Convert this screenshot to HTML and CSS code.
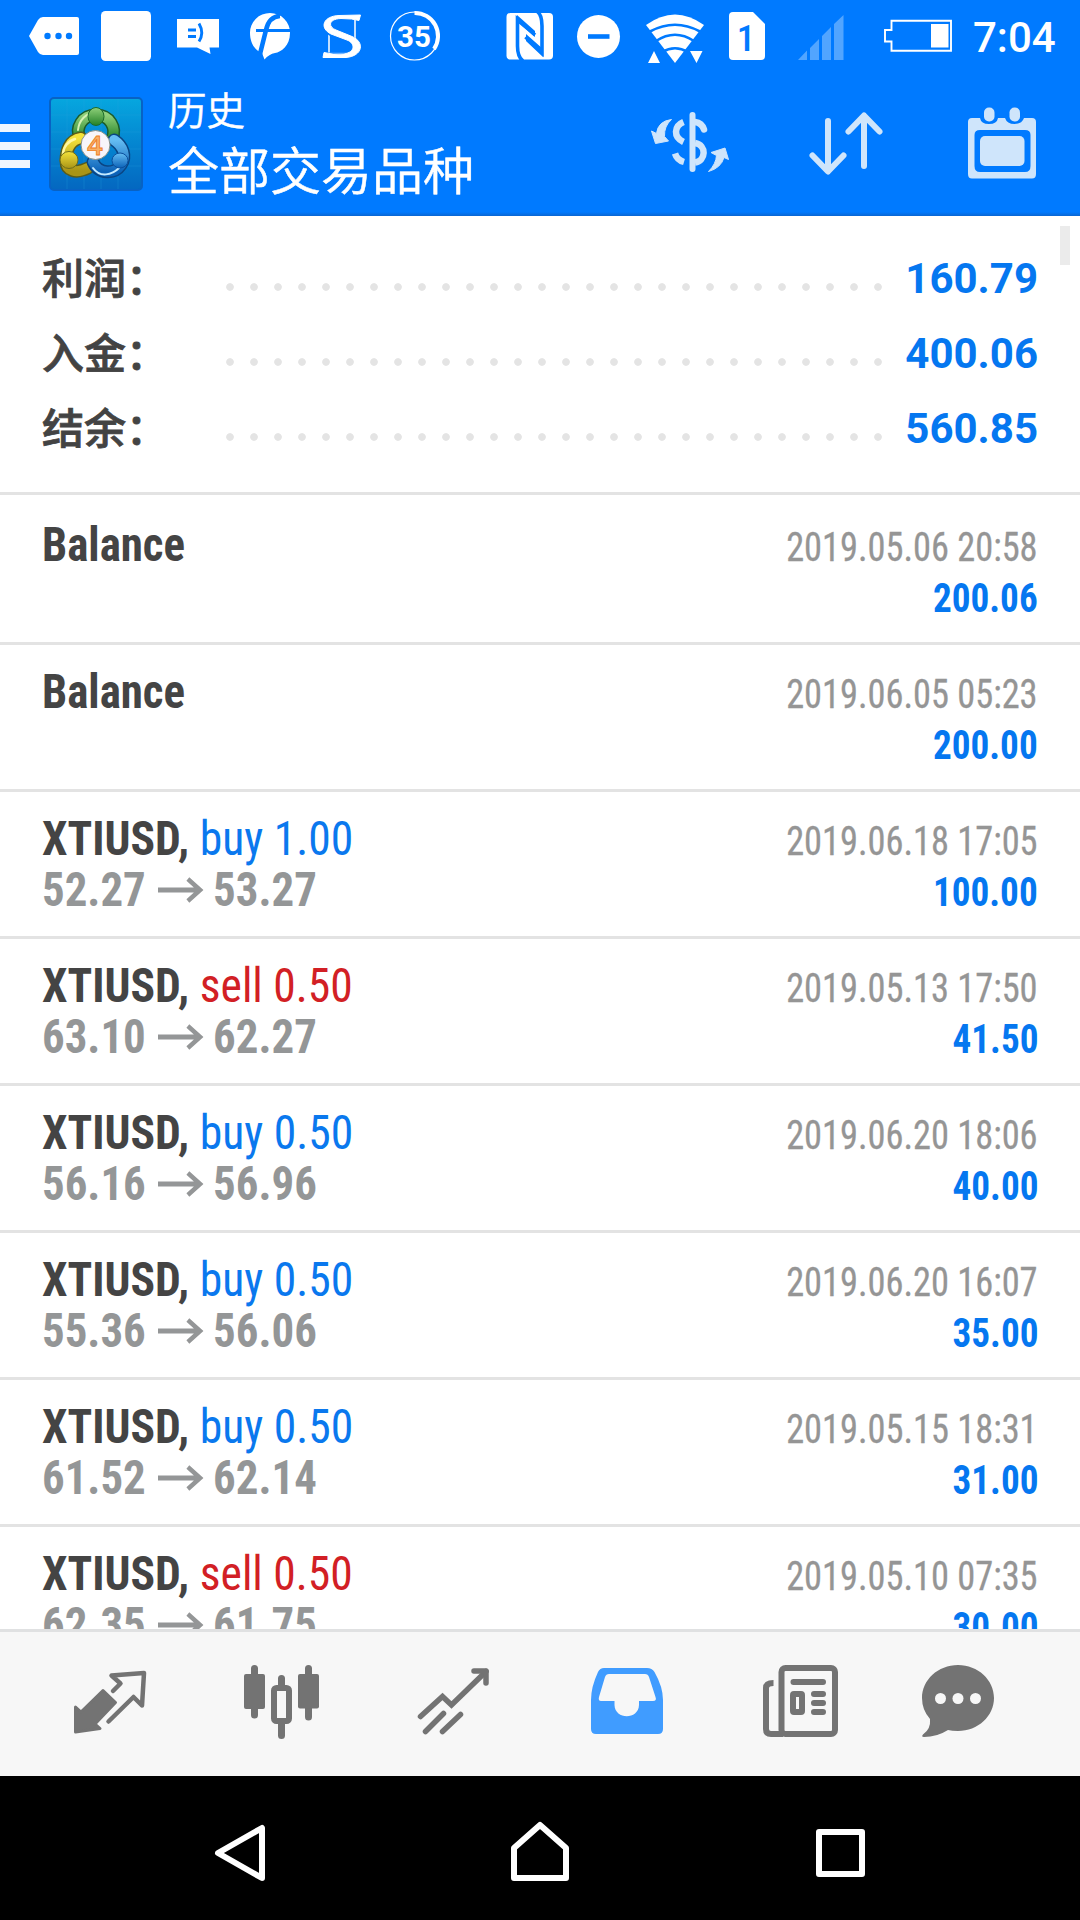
FILE: index.html
```html
<!DOCTYPE html>
<html lang="zh-CN">
<head>
<meta charset="utf-8">
<title>历史</title>
<link rel="stylesheet" href="styles.css">
</head>
<body>
<div class="screen">
  <header class="top">
    <div class="status">
      <svg width="90" height="72" viewBox="0 0 90 72"><path fill="#fff" d="M29 36 38 20Q40 17 43 17H77Q79 17 79 19V53Q79 55 77 55H43Q40 55 38 52Z"/><g fill="#007aff"><circle cx="47.5" cy="36" r="3.2"/><circle cx="58.5" cy="36" r="3.2"/><circle cx="69" cy="36" r="3.2"/></g></svg>
      <svg width="74" height="72" viewBox="90 0 74 72"><rect x="101" y="11" width="50" height="50" rx="4.500" fill="#fff"/></svg>
      <svg width="72" height="72" viewBox="164 0 72 72"><path fill="#fff" d="M177 19H219V47.500H209.500L210.500 54 197 47.500H177Z"/><path d="M188 30H196M188 36.500H196M199 23.500Q204.500 33 199 41.500" fill="none" stroke="#007aff" stroke-width="2.900"/></svg>
      <svg width="72" height="72" viewBox="236 0 72 72"><path fill="#fff" d="M270 13A20 19.500 0 0 1 290 33C290 46 281 52 275 53Q269 54 264.500 59.500L262 53C254 50 250 42 250 33A20 19.500 0 0 1 270 13Z"/><path d="M280 16Q269 16.500 266 30L259.500 56" fill="none" stroke="#007aff" stroke-width="4.600"/><path d="M256 30.500H291" fill="none" stroke="#007aff" stroke-width="3"/></svg>
      <svg width="72" height="72" viewBox="308 0 72 72"><path d="M329 18.500H355V53.500H329Z" fill="none" stroke="#fff" stroke-width="1.500"/><path d="M360 16.500H340C325 16 321 28 332 33L350 39C364 45 362 56 346 56H324" fill="none" stroke="#007aff" stroke-width="7"/><path d="M360.500 15 359 20.500Q353 18.500 341 18.500C328 19 328 27 336 30L352 36.500C365 42 363 56 346 57.500H323L324 52.500Q332 55 344 54C356 52 355 43 347 40L331 34C319 28 323 16 339 15.500Z" fill="#fff" stroke="#fff"/></svg>
      <svg width="115" height="72" viewBox="380 0 115 72"><circle cx="414.500" cy="36" r="24" fill="none" stroke="#fff" stroke-width="1.200"/><path d="M414.500 13A23 23 0 0 1 434 49" fill="none" stroke="#fff" stroke-width="4"/><text class="badge-num" x="414" y="46.500" text-anchor="middle">35</text></svg>
      <svg width="70" height="72" viewBox="495 0 70 72"><rect x="506.500" y="13" width="46.500" height="46.500" rx="4" fill="#fff"/><g fill="none" stroke="#007aff" stroke-width="3.600"><path d="M523 61Q517.500 57 517.500 46V19L535 35"/><path d="M537 11Q542 15 542 26V53L525.500 37"/></g><path d="M517 15 535 31V37L517 22ZM543 57 526 41V34L543 49Z" fill="#007aff"/></svg>
      <svg width="71" height="72" viewBox="565 0 71 72"><circle cx="598.500" cy="36.500" r="21.500" fill="#fff"/><path d="M588 36.500H609.500" stroke="#007aff" stroke-width="4.600"/></svg>
      <svg width="81" height="72" viewBox="636 0 81 72"><path fill="#fff" d="M646 25Q675 4 704 25L675 63Z"/><g fill="none" stroke="#007aff" stroke-width="2.600"><path d="M650 31.500Q675 18 700 31.500"/><path d="M656 41Q675 28.500 694 41"/><path d="M662 52Q675 44.500 688 52"/></g><path fill="#fff" stroke="#007aff" stroke-width="2" paint-order="stroke" d="M648 63 654 51 660 63ZM690 51H702.500L696.500 63Z"/></svg>
      <svg width="70" height="72" viewBox="717 0 70 72"><path fill="#fff" d="M733 12H753L765 24V56Q765 60 761 60H733Q729 60 729 56V16Q729 12 733 12Z"/><text class="sim-num" x="746" y="51" text-anchor="middle">1</text></svg>
      <svg width="75" height="72" viewBox="787 0 75 72"><path fill="#52a5ff" d="M798 60 807 50.500V60ZM810 60V48L819 39V60ZM822 60V36L831 27V60ZM834 60V24L843.500 15V60Z"/></svg>
      <svg width="98" height="72" viewBox="862 0 98 72"><path d="M891.500 20.800H951V50.800H891.500V41.500H885V30H891.500Z" fill="none" stroke="#fff" stroke-width="1.900"/><rect x="931" y="24" width="17.500" height="23.500" fill="#fff"/></svg>
      <span class="clock">7:04</span>
    </div>
    <div class="toolbar">
      <svg width="49" height="144" viewBox="0 72 49 144"><path fill="#eff6ff" d="M0 124H30V132H0ZM0 142H30V150H0ZM0 160H30V168H0Z"/></svg>
      <svg width="94" height="144" viewBox="49 72 94 144">
        <defs>
          <linearGradient id="tile" x1="0" y1="0" x2="0" y2="1"><stop offset="0" stop-color="#06a7df"/><stop offset=".55" stop-color="#0482cf"/><stop offset="1" stop-color="#0467c0"/></linearGradient>
          <linearGradient id="green" x1="0" y1="0" x2="0" y2="1"><stop offset="0" stop-color="#8fd07a"/><stop offset="1" stop-color="#238127"/></linearGradient>
          <linearGradient id="gold" x1="0" y1="0" x2="0" y2="1"><stop offset="0" stop-color="#f4e23a"/><stop offset="1" stop-color="#a99416"/></linearGradient>
          <linearGradient id="azure" x1="0" y1="0" x2="0" y2="1"><stop offset="0" stop-color="#65bdf3"/><stop offset="1" stop-color="#0b62b8"/></linearGradient>
        </defs>
        <rect x="50" y="98" width="92" height="92" rx="4" fill="url(#tile)" stroke="#0862c4" stroke-width="2"/>
        <path d="M67 99V189M84 99V189M101 99V189M118 99V189M51 115H141M51 132H141M51 149H141M51 166H141" stroke="#2aa5df" stroke-width=".6" opacity=".45"/>
        <g fill="none" stroke-linecap="round">
          <path d="M80 138C75 128 82 115 96 115S117 128 112 139" stroke="#1b5c2c" stroke-width="13"/><path d="M80 138C75 128 82 115 96 115S117 128 112 139" stroke="url(#green)" stroke-width="10"/>
          <path d="M81 138C69 140 66 151 66 161S76 174 88 168" stroke="#5a5c1a" stroke-width="13"/><path d="M81 138C69 140 66 151 66 161S76 174 88 168" stroke="url(#gold)" stroke-width="10"/>
          <path d="M114 140C123 146 127 156 121 165S99 175 93 162" stroke="#0a4583" stroke-width="13"/><path d="M114 140C123 146 127 156 121 165S99 175 93 162" stroke="url(#azure)" stroke-width="10"/>
          <path d="M78 130C79 120 86 113 95 113" stroke="#d5f0b4" stroke-width="2"/><path d="M63 155C63 147 68 141 75 139" stroke="#fff7a0" stroke-width="2.500"/><path d="M93 168C100 178 112 175 119 168" stroke="#c3e9ff" stroke-width="2"/>
        </g>
        <ellipse cx="96" cy="116.500" rx="8" ry="9" fill="url(#green)" stroke="#1b6a2b"/>
        <ellipse cx="69" cy="160" rx="9" ry="8.500" fill="url(#gold)" stroke="#6f6d1a"/>
        <ellipse cx="120" cy="160.500" rx="8" ry="7.500" fill="url(#azure)" stroke="#0b4f9d"/>
        <circle cx="95.500" cy="145" r="14.500" fill="#f7f5fa" stroke="#85908a"/>
        <text class="logo-num" x="95" y="154.500" text-anchor="middle">4</text>
      </svg>
      <div class="titles"><span class="title-small">历史</span><span class="title-big">全部交易品种</span></div>
      <svg width="120" height="144" viewBox="630 72 120 144"><g fill="none" stroke="#cfe5fb"><path d="M692.500 115V169" stroke-width="6" stroke-linecap="round"/><path d="M683.500 122C674 126 673 137 683.500 142" stroke-width="6.500"/><path d="M675 153.500Q677 160 684 162" stroke-width="6.500"/><path d="M695 122Q702 123 704 129.500" stroke-width="6.500" stroke-linecap="round"/><path d="M695 143C707 145 706 161 695 162.500" stroke-width="6.500"/></g><path fill="#cfe5fb" d="M671.500 119.500Q658 121 656.500 133.500L651.500 131 655.500 143.500 668.500 141 664.500 136.500Q664 126 671.500 119.500ZM708.500 171.500Q721 168 724 157.500L728.500 159.500 725 148 711 152.500 716.500 155.500Q716 164 708.500 171.500Z" stroke="#cfe5fb" stroke-linejoin="round"/></svg>
      <svg width="180" height="144" viewBox="750 72 180 144"><g fill="none" stroke="#cfe5fb" stroke-width="6" stroke-linecap="round" stroke-linejoin="round"><path d="M828 121V171M812.500 155.500 828 171.500 843.500 155.500"/><path d="M864 166V116M848.500 131.500 864 115.500 879.500 131.500"/></g></svg>
      <svg width="150" height="144" viewBox="930 72 150 144"><path fill="#cfe5fb" fill-rule="evenodd" d="M972 118H980Q981 124 989 124T998 118H1005Q1007 124 1014.500 124T1024 118H1032Q1036 118 1036 122V174Q1036 178.500 1032 178.500H972Q968 178.500 968 174V122Q968 118 972 118ZM980 130Q974.500 130 974.500 135V166Q974.500 172 980 172H1025Q1030.500 172 1030.500 166V135Q1030.500 130 1025 130Z"/><rect x="980" y="136" width="44.500" height="30" rx="5" fill="#cfe5fb"/><rect x="984" y="107.500" width="10.500" height="14" rx="5" fill="#cfe5fb"/><rect x="1009.500" y="107.500" width="10.500" height="14" rx="5" fill="#cfe5fb"/></svg>
    </div>
  </header>

  <main class="list">
    <section class="summary">
      <div class="sum"><span class="sum-label">利润：</span><i class="dots"></i><b class="sum-val">160.79</b></div>
      <div class="sum"><span class="sum-label">入金：</span><i class="dots"></i><b class="sum-val">400.06</b></div>
      <div class="sum"><span class="sum-label">结余：</span><i class="dots"></i><b class="sum-val">560.85</b></div>
      <span class="scrollbar"></span>
    </section>
    <article class="deal"><div class="left"><span class="name balance">Balance</span></div><div class="right"><span class="date">2019.05.06 20:58</span><b class="value">200.06</b></div></article>
    <article class="deal"><div class="left"><span class="name balance">Balance</span></div><div class="right"><span class="date">2019.06.05 05:23</span><b class="value">200.00</b></div></article>
    <article class="deal"><div class="left"><span class="name">XTIUSD, <span class="buy">buy 1.00</span></span><span class="price">52.27<svg class="arrow" viewBox="0 0 49 26"><path d="M0 13H45M32 2 45 13 32 24"/></svg>53.27</span></div><div class="right"><span class="date">2019.06.18 17:05</span><b class="value">100.00</b></div></article>
    <article class="deal"><div class="left"><span class="name">XTIUSD, <span class="sell">sell 0.50</span></span><span class="price">63.10<svg class="arrow" viewBox="0 0 49 26"><path d="M0 13H45M32 2 45 13 32 24"/></svg>62.27</span></div><div class="right"><span class="date">2019.05.13 17:50</span><b class="value">41.50</b></div></article>
    <article class="deal"><div class="left"><span class="name">XTIUSD, <span class="buy">buy 0.50</span></span><span class="price">56.16<svg class="arrow" viewBox="0 0 49 26"><path d="M0 13H45M32 2 45 13 32 24"/></svg>56.96</span></div><div class="right"><span class="date">2019.06.20 18:06</span><b class="value">40.00</b></div></article>
    <article class="deal"><div class="left"><span class="name">XTIUSD, <span class="buy">buy 0.50</span></span><span class="price">55.36<svg class="arrow" viewBox="0 0 49 26"><path d="M0 13H45M32 2 45 13 32 24"/></svg>56.06</span></div><div class="right"><span class="date">2019.06.20 16:07</span><b class="value">35.00</b></div></article>
    <article class="deal"><div class="left"><span class="name">XTIUSD, <span class="buy">buy 0.50</span></span><span class="price">61.52<svg class="arrow" viewBox="0 0 49 26"><path d="M0 13H45M32 2 45 13 32 24"/></svg>62.14</span></div><div class="right"><span class="date">2019.05.15 18:31</span><b class="value">31.00</b></div></article>
    <article class="deal"><div class="left"><span class="name">XTIUSD, <span class="sell">sell 0.50</span></span><span class="price">62.35<svg class="arrow" viewBox="0 0 49 26"><path d="M0 13H45M32 2 45 13 32 24"/></svg>61.75</span></div><div class="right"><span class="date">2019.05.10 07:35</span><b class="value">30.00</b></div></article>
  </main>

  <nav class="tabs">
    <svg width="180" height="144" viewBox="0 1632 180 144"><path fill="#737373" stroke="#737373" stroke-width="3" stroke-linejoin="round" d="M75.500 1707 81 1712 103 1690.500 115.500 1702.500 95 1724 100 1728.500 75.500 1732Z"/><path fill="none" stroke="#737373" stroke-width="4.500" stroke-linecap="round" stroke-linejoin="round" d="M113 1691 120.500 1683.500 111.500 1675.500 144 1673 142 1705.500 133.500 1697 108.500 1721.500"/></svg>
    <svg width="190" height="144" viewBox="180 1632 190 144"><g stroke="#737373" stroke-width="7" stroke-linecap="round"><path d="M254.500 1668.500V1715M281.500 1678.500V1690M281.500 1720V1735.500M308.500 1668.500V1717"/></g><g fill="#737373"><rect x="244" y="1674" width="21" height="35" rx="2"/><rect x="298" y="1674" width="21" height="34.500" rx="2"/></g><rect x="274" y="1688" width="15" height="33" rx="2.500" fill="#f7f7f7" stroke="#737373" stroke-width="6"/></svg>
    <svg width="170" height="144" viewBox="370 1632 170 144"><g fill="none" stroke="#737373" stroke-width="5.500"><path stroke-linecap="round" d="M420.500 1716.500 442.500 1696.500 451.500 1705 486 1671.500"/><path stroke-linecap="round" stroke-linejoin="round" d="M474 1671H486V1683"/><path d="M443.500 1713.500 425.500 1731.500M460.500 1714.500 442.500 1731.500" stroke-linecap="round"/></g></svg>
    <svg width="180" height="144" viewBox="540 1632 180 144"><path fill="#409cff" fill-rule="evenodd" d="M604 1668H647Q652 1668 654.500 1672Q663 1687 663 1700V1729Q663 1734 658 1734H596Q591 1734 591 1729V1700Q591 1687 598 1672Q600 1668 604 1668ZM609 1674Q606 1674 605 1677L599 1697Q598 1701 601 1701H614.500V1705C615 1720 638.500 1720 639 1705V1701H653Q657 1701 655.500 1697L649 1677Q648 1674 645 1674Z"/></svg>
    <svg width="170" height="144" viewBox="720 1632 170 144"><g fill="none" stroke="#737373" stroke-width="6"><rect x="781.500" y="1668" width="53.500" height="66" rx="4"/><path d="M773.500 1683Q766 1683 766 1688V1729Q766 1734 771 1734H783"/></g><g stroke="#737373" stroke-width="6" stroke-linecap="round"><path d="M793.500 1682H823M814 1694H823M814 1703H823M814 1712H823"/></g><rect x="793" y="1694" width="9" height="18" rx="1" fill="#f7f7f7" stroke="#737373" stroke-width="6"/></svg>
    <svg width="190" height="144" viewBox="890 1632 190 144"><path fill="#737373" d="M958 1665C978 1665 994 1680 994 1698S978 1731 958 1731Q952 1731 948 1730Q937 1737 924 1737Q921 1737 923 1734.500Q931 1729 930 1719Q922 1710 922 1698C922 1680 938 1665 958 1665Z"/><g fill="#f7f7f7"><circle cx="940.500" cy="1698.500" r="5.500"/><circle cx="958" cy="1698.500" r="5.500"/><circle cx="975.500" cy="1698.500" r="5.500"/></g></svg>
  </nav>

  <footer class="system">
    <svg width="390" height="144" viewBox="0 1776 390 144"><path d="M262 1828V1878L218 1853Z"/></svg>
    <svg width="300" height="144" viewBox="390 1776 300 144"><path d="M514 1878V1848L540 1825 566 1848V1878Z"/></svg>
    <svg width="390" height="144" viewBox="690 1776 390 144"><path d="M819 1832H862V1874H819Z"/></svg>
  </footer>
</div>
</body>
</html>
```
FILE: styles.css
```css
* { box-sizing: border-box; }
body { margin: 0; background: #fff; font-family: Roboto, "Noto Sans CJK SC", sans-serif; }
svg { display: block; flex: none; }

.screen { width: 1080px; height: 1920px; display: flex; flex-direction: column; overflow: hidden; }

.top { flex: none; height: 216px; color: #fff; background: linear-gradient(#007aff 212px, #0a66d2 216px); }
.status { display: flex; height: 72px; }
.clock { flex: 1; padding-left: 13px; font-size: 42px; font-weight: 500; line-height: 75px; }
.badge-num { font-size: 29.5px; font-weight: 700; fill: #fff; }
.sim-num { font: 500 37px "Roboto Condensed", Roboto, sans-serif; fill: #007aff; }
.logo-num { font: 600 27px "Open Sans", sans-serif; fill: #f9b067; stroke: #ee7d22; stroke-width: .9px; }

.toolbar { display: flex; height: 144px; }
.titles { flex: 1; display: flex; flex-direction: column; padding: 11px 0 0 25px; font-family: "Noto Sans CJK SC", sans-serif; font-weight: 350; white-space: nowrap; -webkit-text-stroke: .5px #fff; }
.title-small { font-size: 38.5px; line-height: 50px; }
.title-big { font-size: 51px; line-height: 70px; }

.list { flex: 1; min-height: 0; overflow: hidden; background: #fff; }
.summary { position: relative; height: 279px; padding: 25px 42px 0; border-bottom: 3px solid #e3e3e3; }
.sum { display: flex; align-items: center; height: 75px; }
.sum-label { width: 182px; padding-bottom: 6px; font-family: "Noto Sans CJK SC", sans-serif; font-size: 42px; font-weight: 500; line-height: 69px; color: #434343; white-space: nowrap; -webkit-text-stroke: .8px #434343; }
.dots { flex: none; width: 672px; height: 24px; margin-top: 17px; margin-left: -6px; background: radial-gradient(circle at 12px 12px, #e4e4e4 3.4px, transparent 4.2px) 0 0 / 24px 24px; }
.sum-val { flex: 1; text-align: right; font-size: 42px; line-height: 75px; color: #0577f0; }
.scrollbar { position: absolute; top: 10px; right: 10px; width: 10px; height: 39px; background: #ebebeb; }

.deal { display: flex; justify-content: space-between; height: 147px; padding: 21px 42px 0; border-bottom: 3px solid #e3e3e3; font-family: "Roboto Condensed", Roboto, sans-serif; }
.summary + .deal { height: 150px; padding-top: 24px; }
.left, .right { display: flex; flex-direction: column; white-space: nowrap; }
.left { align-items: flex-start; font-size: 48px; font-weight: 700; line-height: 51px; color: #444; }
.right { align-items: flex-end; font-size: 40px; line-height: 51px; padding-top: 3px; }
/* Type in the rows is set slightly narrower than the condensed cut */
.name { transform: scaleX(.949); transform-origin: left; }
.balance { transform: scaleX(.935); }
.buy, .sell { font-weight: 400; }
.buy { color: #0a78ee; }
.sell { color: #d21f25; }
.price { display: flex; align-items: center; color: #949697; transform: scaleX(.935); transform-origin: left; }
.arrow { width: 49px; height: 26px; margin: 0 10px 0 13px; fill: none; stroke: #949697; stroke-width: 4.8px; }
.date { color: #959595; transform: scaleX(.909); transform-origin: right; -webkit-text-stroke: .3px #959595; }
.value { color: #0577f0; transform: scaleX(.93); transform-origin: right; }

.tabs { flex: none; display: flex; height: 147px; background: #f7f7f7; border-top: 3px solid #e0e1e2; }
.system { flex: none; display: flex; height: 144px; background: #000; fill: none; stroke: #fff; stroke-width: 6px; stroke-linejoin: round; }
```
